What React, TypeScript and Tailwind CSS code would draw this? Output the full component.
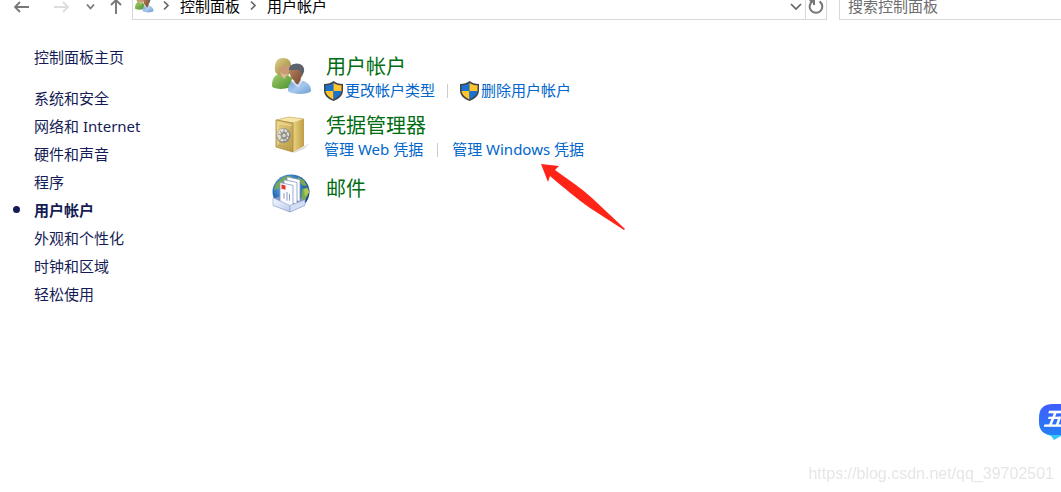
import type { ReactNode } from "react";

function UsersIcon({ className, id }: { className: string; id: string }) {
  return (
    <svg viewBox="0 0 40 41" preserveAspectRatio="none" className={className} aria-hidden="true">
      <defs>
        <linearGradient id={`${id}-green`} x1="0" y1="0" x2="1" y2="1">
          <stop offset="0" stopColor="#a3cf6c" />
          <stop offset="1" stopColor="#4d8f2f" />
        </linearGradient>
        <linearGradient id={`${id}-blue`} x1="0" y1="0" x2="1" y2="1">
          <stop offset="0" stopColor="#6f9fd3" />
          <stop offset="0.5" stopColor="#a5c8ee" />
          <stop offset="1" stopColor="#6b9bd0" />
        </linearGradient>
        <linearGradient id={`${id}-hair`} x1="0" y1="0" x2="1" y2="1">
          <stop offset="0" stopColor="#ddd08c" />
          <stop offset="1" stopColor="#9b8236" />
        </linearGradient>
        <linearGradient id={`${id}-face`} x1="0" y1="0" x2="1" y2="1">
          <stop offset="0" stopColor="#b98560" />
          <stop offset="1" stopColor="#7a4c31" />
        </linearGradient>
      </defs>
      <path d="M0 30c0-7 3-10 7-12l8 1 5 4-2 10c-6 2-13 2-17 0-1-1-1-2-1-3z" fill={`url(#${id}-green)`} />
      <path d="M3 15C2 6 5 1 11 1c5 0 8 3 8 8 0 4 0 8-2 10l-7 1c-4 0-6-2-7-5z" fill={`url(#${id}-hair)`} />
      <path d="M8 17l4 7 4-6-2-3z" fill="#e2b896" />
      <path d="M7 11c4 0 7-1 9-4l2 4c0 5-2 8-5 8s-6-4-6-8z" fill="#c99a76" />
      <path d="M16 37c0-7 2-11 8-12l7 1c6 2 8 6 8 11-4 4-18 4-23 0z" fill={`url(#${id}-blue)`} />
      <path d="M20 27l4-3 7 2-5 7z" fill="#d2e4f8" />
      <path d="M22 23l7 1-3 6c-3-1-4-4-4-7z" fill="#8a593b" />
      <path d="M18 17c0-5 3-7 7-7s6 3 5 9c0 4-3 7-5 7-4 0-7-4-7-9z" fill={`url(#${id}-face)`} />
      <path d="M17 14c0-4 3-7 8-7s8 4 7 9l-2 5c-1-4-1-7-4-7-3-1-6 1-9 0z" fill="#5c636c" />
    </svg>
  );
}

function SafeIcon() {
  return (
    <svg viewBox="0 0 40 40" className="size-10" aria-hidden="true">
      <defs>
        <linearGradient id="safe-front" x1="0" y1="0" x2="1" y2="1">
          <stop offset="0" stopColor="#e9d489" />
          <stop offset="1" stopColor="#b9973f" />
        </linearGradient>
        <linearGradient id="safe-side" x1="0" y1="0" x2="1" y2="0">
          <stop offset="0" stopColor="#ead47f" />
          <stop offset="1" stopColor="#bf9c46" />
        </linearGradient>
      </defs>
      <path d="M21 37l10-4 7-4-6 6-10 4z" fill="#dedede" />
      <path d="M4 6l13-3 15 2-11 4z" fill="#f5e7a9" stroke="#c6ab5e" strokeWidth="0.7" />
      <path d="M21 9l11-4v27l-11 6z" fill="url(#safe-side)" />
      <path d="M4 6l17 3v29L4 33z" fill="url(#safe-front)" stroke="#a88735" strokeWidth="0.8" />
      <path d="M6 9l13 2.500v23L6 31z" fill="none" stroke="#f2dfa0" />
      <path d="M6 31l13 3.500V12" fill="none" stroke="#92722b" strokeWidth="0.7" />
      <ellipse cx="11.500" cy="21.500" rx="7" ry="7.500" fill="#8d8b83" />
      <ellipse cx="11" cy="21" rx="6" ry="6.500" fill="#dddcd5" />
      <ellipse cx="12" cy="21.500" rx="4" ry="4.500" fill="#a3a29b" stroke="#f1f0e9" strokeWidth="0.8" />
      <path d="M12 15v13M6 20l12 3M8 26l8-9M8 17l8 10" stroke="#77766f" strokeWidth="0.7" />
      <circle cx="12" cy="21.500" r="1.7" fill="#dad9d2" />
    </svg>
  );
}

function MailIcon() {
  return (
    <svg viewBox="0 0 40 42" preserveAspectRatio="none" className="size-10" aria-hidden="true">
      <defs>
        <radialGradient id="mail-globe" cx="0.4" cy="0.35" r="0.7">
          <stop offset="0" stopColor="#7fc7f2" />
          <stop offset="0.6" stopColor="#286fb6" />
          <stop offset="1" stopColor="#153777" />
        </radialGradient>
        <linearGradient id="mail-tray" x1="0" y1="0" x2="1" y2="1">
          <stop offset="0" stopColor="#f3f7ff" />
          <stop offset="1" stopColor="#bdcbea" />
        </linearGradient>
      </defs>
      <circle cx="19" cy="20" r="18.500" fill="url(#mail-globe)" />
      <path d="M4 11l8-7 8-1-4 4-6 3-3 6-5 2zM26 4l6 4 3 6-4-1-5-5zM30 17l5-2 2 6-4 8-4-2z" fill="#78a952" />
      <path d="M32 17l4-1 1 4-4 5z" fill="#b4c755" />
      <path d="M1 27l13-5 19 6v6l-15 7-17-7z" fill="#8397c5" />
      <path d="M15 4l13 3v23l-13-4z" fill="#fff" stroke="#7e93bb" strokeWidth="0.8" />
      <path d="M12 7l13 3v23l-13-4z" fill="#fff" stroke="#7e93bb" strokeWidth="0.8" />
      <path d="M8 10l13 3v25L8 33z" fill="#fbfcff" stroke="#8799bd" strokeWidth="0.8" />
      <path d="M9.500 12l4 1v4.500l-4-1z" fill="#e53727" />
      <path d="M12 21v6M15 20v9M17.500 22v7" stroke="#8997bd" />
      <path d="M1 26l17 8v7L1 34z" fill="url(#mail-tray)" stroke="#8ba0cd" strokeWidth="0.6" />
      <path d="M18 34l15-6v6l-15 7z" fill="#d3ddf3" stroke="#8ba0cd" strokeWidth="0.6" />
    </svg>
  );
}

function ShieldIcon() {
  return (
    <svg viewBox="0 0 19 20" className="h-5 w-[19px] shrink-0" aria-hidden="true">
      <path d="M9.500 0C7 1.900 4 2.900 0 3v6c0 5 3 8.700 9.500 11C16 17.700 19 14 19 9V3c-4-.1-7-1.100-9.500-3z" fill="#404448" />
      <path d="M9.500 1.900C7 3.500 4.500 4.200 1.500 4.300V10h8z" fill="#1a72ce" />
      <path d="M9.500 1.900V10h8V4.300c-3-.1-5.500-.8-8-2.400z" fill="#ffc42e" />
      <path d="M1.500 10h8v8.400c-4.700-1.900-7.500-4.700-8-8.400z" fill="#ffc42e" />
      <path d="M9.500 10h8c-.5 3.700-3.300 6.500-8 8.400z" fill="#1a72ce" />
    </svg>
  );
}

function Chevron({ down = false }: { down?: boolean }) {
  return (
    <svg viewBox="0 0 12 12" className="size-3 shrink-0" fill="none" stroke="#666" strokeWidth="1.7" aria-hidden="true">
      <path d={down ? "M1 4l5 5 5-5" : "M4 1.500L8 5.500l-4 4"} />
    </svg>
  );
}

function TaskLink({ children, shield = false }: { children: ReactNode; shield?: boolean }) {
  return (
    <a href="#" className="flex items-center gap-0.5 whitespace-nowrap text-[#0066cc] hover:underline">
      {shield && <ShieldIcon />}
      {children}
    </a>
  );
}

function Separator({ wide = false }: { wide?: boolean }) {
  return <span className={`h-3.5 w-px bg-[#ccc] ${wide ? "mx-3.5" : "mx-3"}`} />;
}

function Category({ icon, title, children }: { icon: ReactNode; title: string; children?: ReactNode }) {
  return (
    <section className="flex gap-3">
      <div className="w-10 shrink-0">{icon}</div>
      <div className={children ? "" : "pt-1"}>
        <h2 className="pl-0.5 text-xl leading-6 text-[#006d12]">
          <a href="#">{title}</a>
        </h2>
        {children && <div className="flex h-[23px] items-center text-[15px]">{children}</div>}
      </div>
    </section>
  );
}

const categories = ["系统和安全", "网络和 Internet", "硬件和声音", "程序", "用户帐户", "外观和个性化", "时钟和区域", "轻松使用"];

export default function App() {
  return (
    <div className="min-h-screen overflow-hidden bg-white font-['Noto_Sans','Noto_Sans_CJK_SC',sans-serif] text-[15px] text-black">
      <header className="flex h-5 items-end overflow-hidden">
        <nav className="flex h-7 w-[132px] shrink-0 items-center pl-3.5" aria-label="导航">
          <button aria-label="后退" className="mr-6">
            <svg viewBox="0 0 16 14" className="h-3.5 w-4" fill="none" stroke="#777" strokeWidth="1.8">
              <path d="M15 8H1M6 3L1 8l5 5" />
            </svg>
          </button>
          <button aria-label="前进" className="mr-4">
            <svg viewBox="0 0 16 14" className="h-3.5 w-4" fill="none" stroke="#ddd" strokeWidth="1.8">
              <path d="M0 8h14M9 3l5 5-5 5" />
            </svg>
          </button>
          <button aria-label="最近浏览的位置" className="mr-3">
            <svg viewBox="0 0 12 12" className="size-3" fill="none" stroke="#777" strokeWidth="1.8">
              <path d="M1 4.500l3.500 4 3.500-4" />
            </svg>
          </button>
          <button aria-label="上移">
            <svg viewBox="0 0 12 16" className="h-4 w-3" fill="none" stroke="#777" strokeWidth="1.9">
              <path d="M6 16V2M1 7l5-5 5 5" />
            </svg>
          </button>
        </nav>
        <div className="mr-3 flex h-7 min-w-0 flex-1 items-center border border-[#d9d9d9] pl-0.5">
          <UsersIcon id="crumb" className="h-5 w-[19px] shrink-0 self-start" />
          <span className="mx-1.5">
            <Chevron />
          </span>
          <a href="#" className="mr-[7px] ml-0.5 whitespace-nowrap">控制面板</a>
          <Chevron />
          <a href="#" className="ml-2 whitespace-nowrap">用户帐户</a>
          <button aria-label="历史记录" className="mr-[3px] ml-auto">
            <Chevron down />
          </button>
          <button aria-label="刷新" className="flex h-full w-[21px] items-center justify-center border-l border-[#d9d9d9]">
            <svg viewBox="0 0 16 16" className="size-4" fill="none" stroke="#777" strokeWidth="2">
              <path d="M11.500 3.300A6.300 6.300 0 1 1 5 3M1.500 2.500H6v4.500" />
            </svg>
          </button>
        </div>
        <input
          type="text"
          aria-label="搜索"
          placeholder="搜索控制面板"
          className="h-7 w-[222px] shrink-0 border-y border-l border-[#d9d9d9] pl-2 outline-none placeholder:text-[#6d6d6d]"
        />
      </header>

      <div className="flex">
        <aside className="w-[272px] shrink-0 pt-[23px] pl-[34px] leading-7 text-[#151c55]">
          <a href="#">控制面板主页</a>
          <ul className="mt-[13px]">
            {categories.map((name) => (
              <li key={name} className="relative">
                {name === "用户帐户" && <span className="absolute top-2.5 -left-[21px] size-[7px] rounded-full bg-[#151c55]" />}
                <a href="#" className={name === "用户帐户" ? "font-bold" : ""}>
                  {name}
                </a>
              </li>
            ))}
          </ul>
        </aside>

        <main className="flex flex-1 flex-col gap-3 pt-[35px]">
          <Category icon={<UsersIcon id="accounts" className="h-10 w-10 pt-0.5" />} title="用户帐户">
            <TaskLink shield>更改帐户类型</TaskLink>
            <Separator />
            <TaskLink shield>删除用户帐户</TaskLink>
          </Category>
          <Category icon={<SafeIcon />} title="凭据管理器">
            <TaskLink>管理 Web 凭据</TaskLink>
            <Separator wide />
            <TaskLink>管理 Windows 凭据</TaskLink>
          </Category>
          <Category icon={<MailIcon />} title="邮件" />
        </main>
      </div>

      <svg viewBox="0 0 84 66" className="pointer-events-none absolute top-[164px] left-[541px] h-[66px] w-[84px]" aria-hidden="true">
        <path d="M0 0l18 2-4 4c14 10 26 18 37 28l33 31-1 1-34-22C36 35 22 23 9 12l-2 6z" fill="#ff2418" />
      </svg>

      <button aria-label="五笔输入法" className="fixed right-0 bottom-[51px] h-[38px] w-[22px] overflow-hidden">
        <svg viewBox="0 0 22 38" className="absolute inset-0 h-[38px] w-[22px]" aria-hidden="true">
          <defs>
            <linearGradient id="ime" x1="0" y1="0" x2="0" y2="1">
              <stop offset="0" stopColor="#405cff" />
              <stop offset="1" stopColor="#247ff5" />
            </linearGradient>
          </defs>
          <path d="M3 26c2 5 6 6 9 7l3 4 7-4V24z" fill="#38c6ff" />
          <path d="M22 1H14C4 1 0 6 0 15v4c0 9 5 13 14 13h8z" fill="url(#ime)" />
        </svg>
        <span className="absolute top-0 left-1 text-xl leading-8 font-bold text-white italic">五</span>
      </button>

      <footer className="fixed right-[7px] bottom-2 font-['Liberation_Sans',sans-serif] text-base leading-5 text-[#e6e6e6]">
        https://blog.csdn.net/qq_39702501
      </footer>
    </div>
  );
}
